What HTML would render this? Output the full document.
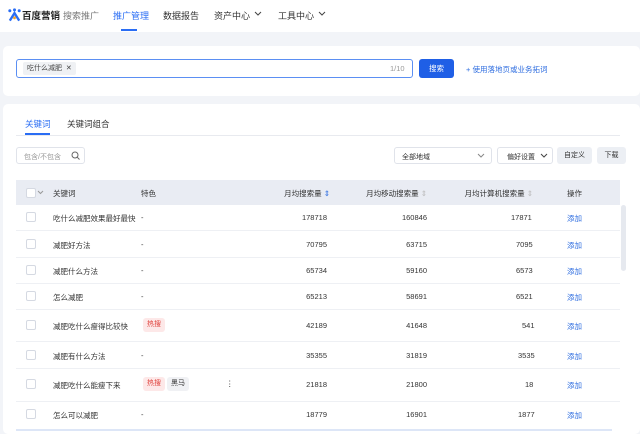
<!DOCTYPE html>
<html><head><meta charset="utf-8"><style>
*{box-sizing:border-box;margin:0;padding:0}
body{width:640px;height:431px;overflow:hidden;background:#f2f4f8;font-family:"Liberation Sans","Noto Sans CJK SC",sans-serif;font-size:7.5px;color:#333;position:relative}
.a{position:absolute;white-space:nowrap}
.nav{position:absolute;left:0;top:0;width:640px;height:32px;background:#fff}
.card{position:absolute;background:#fff;border-radius:5px}
.cb{position:absolute;width:10px;height:10px;border:1px solid #d5d9e2;border-radius:2px;background:#fff;left:26px}
.tag{position:absolute;height:14px;line-height:14px;padding:0 4px;border-radius:3px;font-size:7px}
.hot{background:#fde8e8;color:#e0443e}
.blk{background:#f0f1f4;color:#333}
.r{text-align:right}
.add{color:#2f6ee0}
.sep{position:absolute;left:16px;width:604px;height:1px;background:#eef0f4}
.chev{position:absolute}
</style></head><body>
<div class="nav"></div>
<svg class="a" style="left:7px;top:8px" width="15" height="14" viewBox="0 0 16 14"><circle cx="3" cy="2.5" r="1.6" fill="#2a6df4"/><circle cx="8" cy="1.5" r="1.6" fill="#2a6df4"/><circle cx="13" cy="2.5" r="1.6" fill="#2a6df4"/><path d="M3 13 L8 5 L13 13" stroke="#2a6df4" stroke-width="2.5" fill="none"/><circle cx="8" cy="10" r="1.5" fill="#f3a22b"/></svg>
<div class="a" style="left:22px;top:8px;font-size:9.5px;font-weight:bold;color:#222">百度营销</div>
<div class="a" style="left:63px;top:9px;font-size:9px;color:#777">搜索推广</div>
<div class="a" style="left:113px;top:9px;font-size:9px;color:#2a6df4">推广管理</div>
<div class="a" style="left:121px;top:29px;width:16px;height:2px;background:#2a6df4"></div>
<div class="a" style="left:163px;top:9px;font-size:9px;color:#333">数据报告</div>
<div class="a" style="left:214px;top:9px;font-size:9px;color:#333">资产中心</div>
<svg class="chev" style="left:254px;top:11px" width="8" height="6"><polyline points="1,1 4,4 7,1" fill="none" stroke="#444" stroke-width="1"/></svg>
<div class="a" style="left:278px;top:9px;font-size:9px;color:#333">工具中心</div>
<svg class="chev" style="left:318px;top:11px" width="8" height="6"><polyline points="1,1 4,4 7,1" fill="none" stroke="#444" stroke-width="1"/></svg>

<div class="card" style="left:3px;top:46px;width:637px;height:50px"></div>
<div class="a" style="left:16px;top:59px;width:397px;height:19px;border:1px solid #5b8ff3;border-radius:3px;background:#fff"></div>
<div class="a" style="left:23px;top:62px;height:13px;line-height:13px;padding:0 4px;background:#eff1f4;border-radius:2px;color:#444;font-size:7px">吃什么减肥 &nbsp;✕</div>
<div class="a" style="left:390px;top:64px;color:#999">1/10</div>
<div class="a" style="left:419px;top:59px;width:35px;height:19px;background:#1f5fe6;border-radius:3px;color:#fff;line-height:19px;text-align:center">搜索</div>
<div class="a" style="left:466px;top:64px;color:#2f6ee0">+ 使用落地页或业务拓词</div>

<div class="card" style="left:3px;top:104px;width:637px;height:330px"></div>
<div class="a" style="left:25px;top:118px;color:#2a6df4;font-size:8.5px">关键词</div>
<div class="a" style="left:25px;top:133px;width:25px;height:2px;background:#2a6df4"></div>
<div class="a" style="left:67px;top:118px;color:#333;font-size:8.5px">关键词组合</div>
<div class="a" style="left:16px;top:135px;width:604px;height:1px;background:#e8eaef"></div>
<div class="a" style="left:16px;top:147px;width:69px;height:17px;border:1px solid #e0e3ea;border-radius:3px;padding:4px 7px;color:#999;font-size:7px">包含/不包含</div>
<svg class="chev" style="left:71px;top:151px" width="9" height="9"><circle cx="4" cy="4" r="3" fill="none" stroke="#666" stroke-width="1"/><line x1="6.2" y1="6.2" x2="8.5" y2="8.5" stroke="#666"/></svg>
<div class="a" style="left:394px;top:147px;width:98px;height:17px;border:1px solid #e0e3ea;border-radius:3px;padding:4px 7px;font-size:7px">全部地域</div>
<svg class="chev" style="left:477px;top:153px" width="8" height="6"><polyline points="1,1 4,4 7,1" fill="none" stroke="#888" stroke-width="1"/></svg>
<div class="a" style="left:497px;top:147px;width:56px;height:17px;border:1px solid #e0e3ea;border-radius:3px;padding:4px 9px;font-size:7px">偏好设置</div>
<svg class="chev" style="left:540px;top:153px" width="8" height="6"><polyline points="1,1 4,4 7,1" fill="none" stroke="#444" stroke-width="1"/></svg>
<div class="a" style="left:557px;top:147px;width:35px;height:17px;background:#eceff4;border-radius:3px;line-height:17px;text-align:center;font-size:7px">自定义</div>
<div class="a" style="left:597px;top:147px;width:29px;height:17px;background:#eceff4;border-radius:3px;line-height:17px;text-align:center;font-size:7px">下载</div>

<div class="a" style="left:16px;top:180px;width:604px;height:25px;background:#e9ecf3"></div>
<div class="cb" style="top:188px"></div>
<svg class="chev" style="left:37px;top:190px" width="7" height="5"><polyline points="1,1 3.5,3.5 6,1" fill="none" stroke="#999" stroke-width="1"/></svg>
<div class="a" style="left:53px;top:188px">关键词</div>
<div class="a" style="left:141px;top:188px">特色</div>
<div class="a r" style="left:240px;width:90px;top:188px">月均搜索量 <span style="color:#2f6ee0">⇕</span></div>
<div class="a r" style="left:330px;width:97px;top:188px">月均移动搜索量 <span style="color:#bbb">⇕</span></div>
<div class="a r" style="left:430px;width:103px;top:188px">月均计算机搜索量 <span style="color:#bbb">⇕</span></div>
<div class="a" style="left:567px;top:188px">操作</div>
<div class="a" style="left:621px;top:205px;width:5px;height:66px;background:#e6e9ef;border-radius:3px"></div>

<div class="cb" style="top:212px"></div><div class="a" style="left:53px;top:213px">吃什么减肥效果最好最快</div><div class="a" style="left:141px;top:213px">-</div><div class="a r" style="left:250px;width:77px;top:213px">178718</div><div class="a r" style="left:350px;width:77px;top:213px">160846</div><div class="a" style="left:511px;top:213px">17871</div><div class="a add" style="left:567px;top:213px">添加</div>
<div class="sep" style="top:230px"></div>
<div class="cb" style="top:239px"></div><div class="a" style="left:53px;top:240px">减肥好方法</div><div class="a" style="left:141px;top:240px">-</div><div class="a r" style="left:250px;width:77px;top:240px">70795</div><div class="a r" style="left:350px;width:77px;top:240px">63715</div><div class="a" style="left:516px;top:240px">7095</div><div class="a add" style="left:567px;top:240px">添加</div>
<div class="sep" style="top:257px"></div>
<div class="cb" style="top:265px"></div><div class="a" style="left:53px;top:266px">减肥什么方法</div><div class="a" style="left:141px;top:266px">-</div><div class="a r" style="left:250px;width:77px;top:266px">65734</div><div class="a r" style="left:350px;width:77px;top:266px">59160</div><div class="a" style="left:516px;top:266px">6573</div><div class="a add" style="left:567px;top:266px">添加</div>
<div class="sep" style="top:283px"></div>
<div class="cb" style="top:291px"></div><div class="a" style="left:53px;top:292px">怎么减肥</div><div class="a" style="left:141px;top:292px">-</div><div class="a r" style="left:250px;width:77px;top:292px">65213</div><div class="a r" style="left:350px;width:77px;top:292px">58691</div><div class="a" style="left:516px;top:292px">6521</div><div class="a add" style="left:567px;top:292px">添加</div>
<div class="sep" style="top:309px"></div>
<div class="cb" style="top:320px"></div><div class="a" style="left:53px;top:321px">减肥吃什么瘦得比较快</div><div class="tag hot" style="left:143px;top:318px">热搜</div><div class="a r" style="left:250px;width:77px;top:321px">42189</div><div class="a r" style="left:350px;width:77px;top:321px">41648</div><div class="a" style="left:522px;top:321px">541</div><div class="a add" style="left:567px;top:321px">添加</div>
<div class="sep" style="top:341px"></div>
<div class="cb" style="top:350px"></div><div class="a" style="left:53px;top:351px">减肥有什么方法</div><div class="a" style="left:141px;top:351px">-</div><div class="a r" style="left:250px;width:77px;top:351px">35355</div><div class="a r" style="left:350px;width:77px;top:351px">31819</div><div class="a" style="left:518px;top:351px">3535</div><div class="a add" style="left:567px;top:351px">添加</div>
<div class="sep" style="top:368px"></div>
<div class="cb" style="top:379px"></div><div class="a" style="left:53px;top:380px">减肥吃什么能瘦下来</div><div class="tag hot" style="left:143px;top:377px">热搜</div><div class="tag blk" style="left:167px;top:377px">黑马</div><div class="a" style="left:226px;top:379px">⋮</div><div class="a r" style="left:250px;width:77px;top:380px">21818</div><div class="a r" style="left:350px;width:77px;top:380px">21800</div><div class="a" style="left:525px;top:380px">18</div><div class="a add" style="left:567px;top:380px">添加</div>
<div class="sep" style="top:401px"></div>
<div class="cb" style="top:409px"></div><div class="a" style="left:53px;top:410px">怎么可以减肥</div><div class="a" style="left:141px;top:410px">-</div><div class="a r" style="left:250px;width:77px;top:410px">18779</div><div class="a r" style="left:350px;width:77px;top:410px">16901</div><div class="a" style="left:518px;top:410px">1877</div><div class="a add" style="left:567px;top:410px">添加</div>
<div class="a" style="left:16px;top:429px;width:596px;height:2px;background:#dde6f7"></div>
</body></html>
